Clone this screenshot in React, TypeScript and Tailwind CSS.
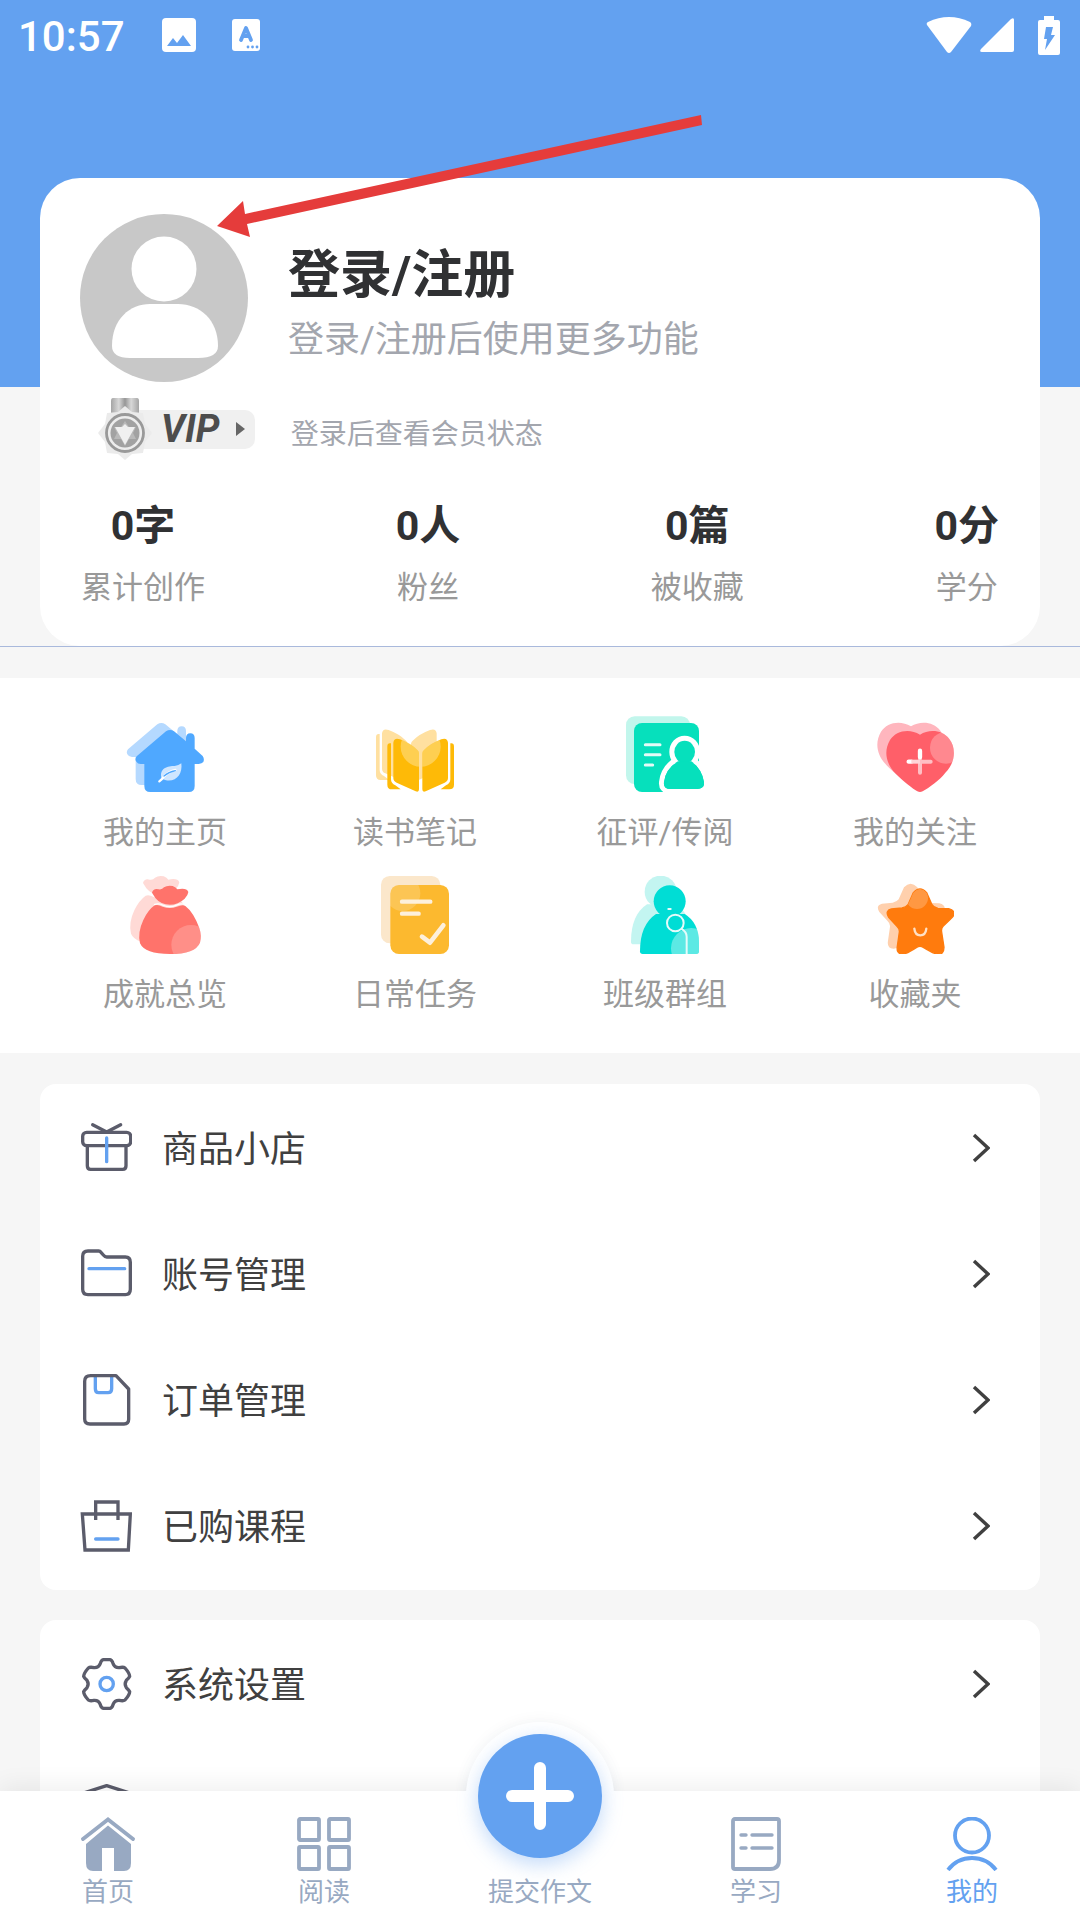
import { useState, type ReactNode } from "react";

const INK = "#5b5c6b";
const BLUE = "#63a1f0";

/* ---------- status bar ---------- */

function StatusBar() {
  return (
    <div className="flex h-[70px] items-center justify-between pr-5 pl-[18px] text-white">
      <div className="flex items-center">
        <span className="pt-1 text-[42px] leading-[48px] font-medium">10:57</span>
        <svg className="ml-[37px] size-[34px]" viewBox="0 0 34 34" aria-hidden>
          <rect width="34" height="34" rx="4" fill="#fff" />
          <path d="M5 28 L11 20 L15 25 L21 17 L29 28 Z" fill={BLUE} />
        </svg>
        <svg className="ml-9 h-8 w-7" viewBox="0 0 28 32" aria-hidden>
          <rect width="28" height="32" rx="3" fill="#fff" />
          <path d="M9 21 L14 9 L19 21 M11 17 H17" fill="none" stroke={BLUE} strokeWidth="3.8" strokeLinecap="round" strokeLinejoin="round" />
          <g fill={BLUE}>
            <circle cx="16" cy="28" r="1.4" />
            <circle cx="20.5" cy="28" r="1.4" />
            <circle cx="25" cy="28" r="1.4" />
          </g>
        </svg>
      </div>
      <div className="flex items-center">
        <svg className="h-9 w-[46px]" viewBox="0 0 46 36" aria-hidden>
          <path d="M1 8 Q0 6 2 5 Q23 -5 44 5 Q46 6 45 9 L25 35 Q23 37 21 35 Z" fill="#fff" />
        </svg>
        <svg className="ml-2 h-[34px] w-[34px]" viewBox="0 0 34 34" aria-hidden>
          <path d="M31 1 Q34 -1 34 2 V32 Q34 34 32 34 H2 Q-1 34 1 31 Z" fill="#fff" />
        </svg>
        <svg className="ml-6 h-[39px] w-[22px]" viewBox="0 0 22 39" aria-hidden>
          <path d="M6 0 H16 V4 H20 Q22 4 22 6 V37 Q22 39 20 39 H2 Q0 39 0 37 V6 Q0 4 2 4 H6 Z" fill="#fff" />
          <path d="M8 11 H15 L13 19 H17 L7 34 L9 23 H6 Z" fill={BLUE} />
        </svg>
      </div>
    </div>
  );
}

/* ---------- profile ---------- */

function Avatar() {
  return (
    <svg className="size-[168px] shrink-0" viewBox="0 0 168 168" aria-hidden>
      <circle cx="84" cy="84" r="84" fill="#c8c8c8" />
      <circle cx="84" cy="55" r="32.5" fill="#fff" />
      <path d="M32 132 C32 105 50 90 70 90 H98 C120 90 138 106 138 132 Q138 144 118 144 H50 Q32 144 32 132 Z" fill="#fff" />
    </svg>
  );
}

function VipBadge() {
  return (
    <button type="button" className="flex h-[62px] items-center">
      <svg className="relative h-[62px] w-[54px]" viewBox="0 0 54 62" aria-hidden>
        <defs>
          <linearGradient id="ribbon">
            <stop offset="0" stopColor="#a5a5a5" />
            <stop offset=".28" stopColor="#d8d8d8" />
            <stop offset=".5" stopColor="#969696" />
            <stop offset=".72" stopColor="#d8d8d8" />
            <stop offset="1" stopColor="#a5a5a5" />
          </linearGradient>
        </defs>
        <path d="M15 0 H39 Q41 0 41 3 V16 H13 V3 Q13 0 15 0 Z" fill="url(#ribbon)" />
        <path d="M27 8 L34 14 L45 15 L47 26 L54 35 L47 44 L45 55 L34 56 L27 62 L20 56 L9 55 L7 44 L0 35 L7 26 L9 15 L20 14 Z" fill="#ebebeb" />
        <circle cx="27" cy="35" r="18.5" fill="#ededed" stroke="#999" strokeWidth="2.8" />
        <circle cx="27" cy="35" r="14.5" fill="#a2a2a2" />
        <path d="M27 48 L23 41 H16 L19 35 L16 29 H23 L27 23 L31 29 H38 L35 35 L38 41 H31 Z" fill="#b9b9b9" />
        <path d="M17 29 L24 29 L27 26 L30 29 H37 L27 47 Z" fill="#f0f0f0" />
      </svg>
      <span className="-ml-9 flex h-[39px] items-center rounded-[10px] bg-[#f0f0f0] pr-[10px] pl-[45px]">
        <span className="text-[38px] leading-[39px] font-bold text-[#4d4d4d] italic">VIP</span>
        <svg className="ml-4 h-[14px] w-[9px]" viewBox="0 0 9 14" aria-hidden>
          <path d="M0 0 L9 7 L0 14 Z" fill="#666" />
        </svg>
      </span>
    </button>
  );
}

const stats = [
  { value: "0字", label: "累计创作" },
  { value: "0人", label: "粉丝" },
  { value: "0篇", label: "被收藏" },
  { value: "0分", label: "学分" },
];

function ProfileCard() {
  return (
    <section className="rounded-[40px] bg-white pt-9 pb-9">
      <div className="flex items-center gap-10 px-10">
        <Avatar />
        <div className="pt-4">
          <h1 className="text-[52px] leading-[64px] font-bold text-[#303133]">
            <a href="#login">登录/注册</a>
          </h1>
          <p className="mt-1 text-4xl leading-[56px] text-[#a3a6ae]">登录/注册后使用更多功能</p>
        </div>
      </div>

      <div className="mt-4 flex items-center gap-9 pl-[58px]">
        <VipBadge />
        <span className="pt-3 text-[28px] leading-10 text-[#a3a6ae]">登录后查看会员状态</span>
      </div>

      <dl className="mt-[42px] flex justify-between px-[41px]">
        {stats.map((s) => (
          <div key={s.label} className="flex flex-col-reverse items-center">
            <dt className="mt-4 text-[31px] leading-[44px] text-[#999]">{s.label}</dt>
            <dd className="text-[41px] leading-[48px] font-bold text-[#303133]">{s.value}</dd>
          </div>
        ))}
      </dl>
    </section>
  );
}

/* ---------- shortcuts ---------- */

const HOUSE =
  "M120 52 Q132 44 144 52 L180 82 V72 Q180 58 193 58 Q206 58 206 72 V104 L230 126 Q236 134 232 144 Q228 149 218 150 H206 V216 Q206 234 188 234 H73 Q55 234 55 216 V150 H44 Q34 150 30 142 Q26 134 32 127 Z";
const PAGE =
  "M52 86 Q54 70 72 76 Q104 88 124 108 Q129 112 129 118 V226 Q129 236 119 232 L62 206 Q52 202 52 192 Z";
const SPINE =
  "M46 88 H42 Q34 88 34 98 V212 Q34 226 48 226 H74 L58 214 Q45 208 45 196 V88 Z";
const HEART =
  "M132 62 C100 42 60 50 42 78 C22 112 30 150 60 180 C85 205 108 222 124 232 Q132 236 140 232 C160 220 190 200 208 176 C240 145 240 100 220 75 C200 48 160 44 132 62 Z";
const SACK_TOP =
  "M78 50 Q82 36 98 40 Q108 42 114 34 Q124 27 140 30 Q150 34 154 40 Q182 34 187 48 Q186 58 176 68 Q156 86 132 86 Q104 86 88 66 Z";
const SACK =
  "M86 88 Q96 84 110 92 Q132 100 152 92 Q170 84 178 90 Q202 108 220 156 Q228 180 222 200 Q208 234 132 234 Q56 234 42 202 Q34 170 52 132 Q66 102 86 88 Z";
const BUST =
  "M42 226 Q42 146 90 114 H176 Q219 140 219 200 V226 Q219 234 211 234 H50 Q42 234 42 226 Z";
const STAR =
  "M112 50 Q132 28 152 50 L168 86 Q173 95 186 97 L218 98 Q240 104 232 120 Q230 124 202 150 Q195 156 197 168 L204 214 Q204 236 184 234 Q174 234 142 214 Q132 208 122 214 Q90 235 80 234 Q60 234 64 210 L70 168 Q71 158 62 150 L38 124 Q26 104 46 99 L78 96 Q90 94 96 86 Z";

function Tile({ children }: { children: ReactNode }) {
  return (
    <svg className="size-[78px]" viewBox="0 0 234 234" aria-hidden>
      {children}
    </svg>
  );
}

const shortcuts = [
  {
    label: "我的主页",
    icon: (
      <Tile>
        <path d={HOUSE} transform="translate(-26 -21)" fill="#b5d9ff" />
        <path d={HOUSE} fill="#4fa8ff" />
        <path d="M107 194 C98 162 126 156 146 156 Q158 155 166 148 C170 180 152 204 120 199 Z" fill="#cfe6ff" />
        <path d="M100 202 Q108 196 112 190 Q128 172 148 168" fill="none" stroke="#fff" strokeWidth="7" strokeLinecap="round" />
        <path d="M114 186 Q128 174 148 170" fill="none" stroke="#4fa8ff" strokeWidth="4" strokeLinecap="round" />
      </Tile>
    ),
  },
  {
    label: "读书笔记",
    icon: (
      <Tile>
        <clipPath id="pages">
          <path d={PAGE} />
          <path d={PAGE} transform="matrix(-1 0 0 1 268 0)" />
        </clipPath>
        <g fill="#ffe0a0" transform="translate(-34 -28)">
          <path d={PAGE} />
          <path d={SPINE} />
          <path d={PAGE} transform="matrix(-1 0 0 1 268 0)" />
        </g>
        <g fill="#feba07">
          <path d={SPINE} />
          <path d={SPINE} transform="matrix(-1 0 0 1 268 0)" />
          <path d={PAGE} />
          <path d={PAGE} transform="matrix(-1 0 0 1 268 0)" />
        </g>
        <circle cx="134" cy="98" r="60" fill="#fff" opacity=".3" clipPath="url(#pages)" />
      </Tile>
    ),
  },
  {
    label: "征评/传阅",
    icon: (
      <Tile>
        <rect y="7" width="192" height="203" rx="26" fill="#c2f6ec" />
        <rect x="24" y="27" width="195" height="207" rx="24" fill="#06e0bc" />
        <path d="M58 92 H102 M58 122 H102 M58 153 H80" stroke="#e4fbf7" strokeWidth="9" strokeLinecap="round" />
        <g fill="#06e0bc" stroke="#fff" strokeWidth="30" paintOrder="stroke">
          <path d="M156 142 Q118 165 114 205 Q112 225 134 225 H214 Q236 223 234 205 Q228 165 196 142 Z" />
          <ellipse cx="176" cy="114" rx="31" ry="34" />
        </g>
        <path d="M156 142 Q118 165 114 205 Q112 225 134 225 H214 Q236 223 234 205 Q228 165 196 142 Z" fill="#06e0bc" />
      </Tile>
    ),
  },
  {
    label: "我的关注",
    icon: (
      <Tile>
        <clipPath id="heart">
          <path d={HEART} />
        </clipPath>
        <path d={HEART} transform="translate(-27 -25)" fill="#ffb6be" />
        <path d={HEART} fill="#ff5f69" />
        <circle cx="210" cy="101" r="48" fill="#fff" opacity=".26" clipPath="url(#heart)" />
        <path d="M132 138 V176 M136 143 H164" stroke="#ffbfc4" strokeWidth="12" strokeLinecap="round" />
        <path d="M132 110 V130 M98 143 H106" stroke="#fff" strokeWidth="13" strokeLinecap="round" />
        <path d="M106 143 H132" stroke="#ffd5d8" strokeWidth="12" />
      </Tile>
    ),
  },
  {
    label: "成就总览",
    icon: (
      <Tile>
        <clipPath id="sack">
          <path d={SACK} />
        </clipPath>
        <g fill="#ffdad6" transform="translate(-27 -29)">
          <path d={SACK_TOP} />
          <path d={SACK} />
        </g>
        <path d={SACK_TOP} fill="#ff736b" />
        <path d={SACK} fill="#ff736b" />
        <path d="M84 86 Q98 80 112 88 Q132 96 150 88 Q168 80 180 87" fill="none" stroke="#fff" strokeWidth="4" />
        <circle cx="195" cy="206" r="59" fill="#fff" opacity=".2" clipPath="url(#sack)" />
      </Tile>
    ),
  },
  {
    label: "日常任务",
    icon: (
      <Tile>
        <clipPath id="sheet">
          <rect x="43" y="27" width="176" height="207" rx="26" />
        </clipPath>
        <rect x="15" width="178" height="202" rx="26" fill="#fbe7cb" />
        <rect x="43" y="27" width="176" height="207" rx="26" fill="#fcb92f" />
        <circle cx="80" cy="52" r="53" fill="#fff" opacity=".18" clipPath="url(#sheet)" />
        <path d="M78 77 H163 M78 113 H128" stroke="#fdf0dc" strokeWidth="13" strokeLinecap="round" />
        <path d="M138 182 L162 200 L202 148" fill="none" stroke="#fdf0dc" strokeWidth="14" strokeLinecap="round" strokeLinejoin="round" />
      </Tile>
    ),
  },
  {
    label: "班级群组",
    icon: (
      <Tile>
        <clipPath id="bust">
          <path d={BUST} />
        </clipPath>
        <g fill="#c3f5f1" transform="translate(-27 -29)">
          <circle cx="131" cy="76" r="48" />
          <path d={BUST} />
        </g>
        <path d={BUST} fill="#00ddd5" />
        <circle cx="131" cy="76" r="48" fill="#00ddd5" />
        <circle cx="196" cy="217" r="61" fill="#fff" opacity=".36" clipPath="url(#bust)" />
        <path d="M127 99 H134" stroke="#e5fbfa" strokeWidth="6" strokeLinecap="round" />
        <circle cx="148" cy="141" r="25" fill="#00ddd5" stroke="#e5fbfa" strokeWidth="6" />
        <path d="M166 158 Q182 168 182 182 V234" fill="none" stroke="#e5fbfa" strokeWidth="6" />
      </Tile>
    ),
  },
  {
    label: "收藏夹",
    icon: (
      <Tile>
        <clipPath id="star">
          <path d={STAR} />
        </clipPath>
        <path d={STAR} transform="translate(-28 -16)" fill="#ffd0ad" />
        <path d={STAR} fill="#ff7b0d" stroke="#ff7b0d" strokeWidth="4" />
        <circle cx="123" cy="66" r="33" fill="#fff" opacity=".22" clipPath="url(#star)" />
        <path d="M115 158 Q117 178 133 178 Q149 178 151 158" fill="none" stroke="#ffe0c4" strokeWidth="7" strokeLinecap="round" />
      </Tile>
    ),
  },
];

function Shortcuts() {
  return (
    <section className="mt-[31px] grid grid-cols-4 gap-y-[23px] bg-white px-10 pt-9 pb-[38px]">
      {shortcuts.map((s) => (
        <a key={s.label} href="#" className="flex flex-col items-center gap-[21px]">
          {s.icon}
          <span className="text-[31px] leading-10 text-[#999]">{s.label}</span>
        </a>
      ))}
    </section>
  );
}

/* ---------- menu lists ---------- */

function LineIcon({ children }: { children: ReactNode }) {
  return (
    <svg
      className="size-[52px]"
      viewBox="0 0 156 156"
      fill="none"
      stroke={INK}
      strokeWidth="10"
      strokeLinecap="round"
      strokeLinejoin="round"
      aria-hidden
    >
      {children}
    </svg>
  );
}

type MenuItem = { label: string; icon: ReactNode; iconOnly?: boolean };

const shopMenu: MenuItem[] = [
  {
    label: "商品小店",
    icon: (
      <LineIcon>
        <path d="M38 8 L80 30 L122 8" />
        <rect x="8" y="31" width="144" height="40" rx="12" />
        <path d="M22 72 V131 Q22 142 32 142 H128 Q138 142 138 131 V72" />
        <path d="M80 48 V119" stroke={BLUE} />
      </LineIcon>
    ),
  },
  {
    label: "账号管理",
    icon: (
      <LineIcon>
        <path d="M56 9 H24 Q8 9 8 25 V124 Q8 140 24 140 H136 Q151 140 151 124 V43 Q151 27 136 27 H80 Q75 27 70 21 L63 13 Q60 9 56 9 Z" />
        <path d="M27 62 H134" stroke={BLUE} />
      </LineIcon>
    ),
  },
  {
    label: "订单管理",
    icon: (
      <LineIcon>
        <path d="M46 8 V44 Q46 56 56 56 H84 Q95 56 95 44 V8" stroke={BLUE} />
        <path d="M32 5 H108 L146 45 V136 Q146 150 132 150 H30 Q14 150 14 135 V22 Q14 5 32 5 Z" />
      </LineIcon>
    ),
  },
  {
    label: "已购课程",
    icon: (
      <LineIcon>
        <path d="M47 60 V6 H114 V60 M7 42 H151 L145 150 H15 Z" strokeLinecap="butt" strokeLinejoin="miter" />
        <path d="M47 117 H114" stroke={BLUE} />
      </LineIcon>
    ),
  },
];

const systemMenu: MenuItem[] = [
  {
    label: "系统设置",
    icon: (
      <LineIcon>
        <path d="M70 5 H90 Q96 6 99 16 Q104 30 118 29 Q130 26 135 30 Q149 46 149 55 Q147 60 139 67 Q132 78 139 89 Q147 96 149 101 Q149 110 135 126 Q130 130 118 127 Q104 126 99 140 Q96 150 90 151 H70 Q64 150 61 140 Q56 126 42 127 Q30 130 25 126 Q11 110 11 101 Q13 96 21 89 Q28 78 21 67 Q13 60 11 55 Q11 46 25 30 Q30 26 42 29 Q56 30 61 16 Q64 6 70 5 Z" />
        <circle cx="80" cy="78" r="20" stroke={BLUE} />
      </LineIcon>
    ),
  },
  {
    label: "隐私政策",
    iconOnly: true,
    icon: (
      <LineIcon>
        <path d="M80 5 L146 26 V80 Q146 125 80 151 Q14 125 14 80 V26 Z" />
        <path d="M54 78 L74 98 L108 62" stroke={BLUE} />
      </LineIcon>
    ),
  },
];

function Menu({ items }: { items: MenuItem[] }) {
  return (
    <ul className="mx-10 rounded-2xl bg-white py-px">
      {items.map((item) => (
        <li key={item.label}>
          <a href="#" aria-label={item.label} className="flex h-[126px] items-center pr-[50px] pl-10">
            {item.icon}
            {!item.iconOnly && (
              <span className="ml-[30px] pt-1 text-4xl leading-[52px] text-[#404040]">{item.label}</span>
            )}
            <svg className="ml-auto h-[30px] w-[18px]" viewBox="0 0 18 30" fill="none" aria-hidden>
              <path d="M2 2 L16 15 L2 28" stroke="#404040" strokeWidth="3.4" />
            </svg>
          </a>
        </li>
      ))}
    </ul>
  );
}

/* ---------- tab bar ---------- */

function TabIcon({ children }: { children: ReactNode }) {
  return (
    <svg className="size-[54px]" viewBox="0 0 54 54" fill="none" stroke="currentColor" strokeWidth="3.8" aria-hidden>
      {children}
    </svg>
  );
}

const tabs = [
  {
    label: "首页",
    icon: (
      <TabIcon>
        <path d="M2 22 L27 2.5 L52 22" strokeLinecap="round" />
        <path d="M27 8.5 L50 27 V46 Q50 54 43 54 H33 V31 H21 V54 H12 Q5 54 5 46 V27 Z" fill="currentColor" stroke="none" />
      </TabIcon>
    ),
  },
  {
    label: "阅读",
    icon: (
      <TabIcon>
        <rect x="2" y="2" width="20" height="21" rx="1" />
        <rect x="32" y="2" width="20" height="21" rx="1" />
        <rect x="2" y="30" width="20" height="22" rx="1" />
        <rect x="32" y="30" width="20" height="22" rx="1" />
      </TabIcon>
    ),
  },
  { label: "提交作文", icon: null },
  {
    label: "学习",
    icon: (
      <TabIcon>
        <path d="M6 2 H48 Q50 2 50 4 V43 Q50 52 41 52 H6 Q4 52 4 50 V4 Q4 2 6 2 Z" />
        <path d="M12 18 H17 M23 18 H43 M12 31 H17 M23 31 H43" strokeWidth="3.4" strokeLinecap="round" />
      </TabIcon>
    ),
  },
  {
    label: "我的",
    icon: (
      <TabIcon>
        <circle cx="27" cy="18.5" r="17" />
        <path d="M3 53 A30 30 0 0 1 51 53" />
      </TabIcon>
    ),
  },
];

function TabBar() {
  const [active, setActive] = useState("我的");

  return (
    <nav className="relative shrink-0 shadow-[0_-4px_24px_rgba(0,0,0,0.07)]">
      {/* white collar that lifts the bar around the compose button */}
      <div className="absolute -top-[69px] left-1/2 size-[148px] -translate-x-1/2 rounded-full bg-white shadow-[0_0_16px_rgba(0,0,0,0.05)]" />
      <div className="relative grid grid-cols-5 bg-white pt-[26px] pb-[13px]">
        {tabs.map((t) => (
          <button
            key={t.label}
            type="button"
            onClick={() => setActive(t.label)}
            className={`flex flex-col items-center gap-1.5 ${active === t.label ? "text-[#63a1f0]" : "text-[#98a9c2]"}`}
          >
            {t.icon ?? (
              <span className="relative size-[54px]">
                <span className="absolute -top-[83px] left-1/2 flex size-[124px] -translate-x-1/2 items-center justify-center rounded-full bg-[#63a1f0] shadow-[0_6px_20px_rgba(99,161,240,0.4)]">
                  <svg className="size-[68px]" viewBox="0 0 68 68" aria-hidden>
                    <path d="M34 6 V62 M6 34 H62" stroke="#fff" strokeWidth="12" strokeLinecap="round" />
                  </svg>
                </span>
              </span>
            )}
            <span className="relative text-[26px] leading-[30px]">{t.label}</span>
          </button>
        ))}
      </div>
    </nav>
  );
}

function Arrow() {
  return (
    <svg className="pointer-events-none absolute top-[110px] left-[210px] h-[140px] w-[500px]" viewBox="210 110 500 140" aria-hidden>
      <path d="M217 226 L243 201 L245 214 L701 115 L702 125 L247 224 L250 237 Z" fill="#e53c3b" />
    </svg>
  );
}

export default function App() {
  return (
    <div className="flex h-screen flex-col bg-[#f6f6f6] font-['Roboto','Noto_Sans_CJK_SC',sans-serif]">
      <main className="relative min-h-0 flex-1 overflow-y-auto [scrollbar-width:none]">
        <header className="h-[387px] bg-[#63a1f0]">
          <StatusBar />
        </header>
        <div className="-mt-[209px] border-b border-[#a9b9dc] px-10">
          <ProfileCard />
        </div>
        <Shortcuts />
        <div className="flex flex-col gap-[30px] py-[31px]">
          <Menu items={shopMenu} />
          <Menu items={systemMenu} />
        </div>
        <Arrow />
      </main>
      <TabBar />
    </div>
  );
}
